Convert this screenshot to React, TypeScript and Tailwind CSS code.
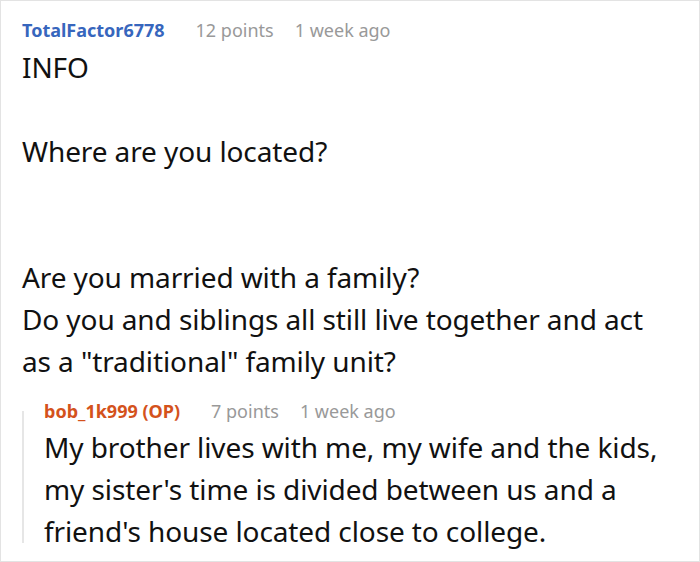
export default function App() {
  return (
    <div className="w-[700px] h-[562px] overflow-hidden bg-white border border-[#e3e3e3] font-['Noto_Sans',sans-serif]">
      {/* Parent comment */}
      <div className="pl-[21px] pt-[17px]">
        <div className="flex items-baseline text-[18px] leading-[24px]">
          <span className="font-bold text-[#3766bd]">TotalFactor6778</span>
          <span className="ml-[31px] text-[#999]">12 points</span>
          <span className="ml-[21px] text-[#999]">1 week ago</span>
        </div>
        <div className="text-[28px] leading-[42px] text-[#111] mt-[4px] tracking-[-0.1px]">
          <p>INFO</p>
          <p>&nbsp;</p>
          <p>Where are you located?</p>
          <p>&nbsp;</p>
          <p>&nbsp;</p>
          <p>Are you married with a family?</p>
          <p>Do you and siblings all still live together and act</p>
          <p>as a "traditional" family unit?</p>
        </div>
      </div>

      {/* Reply */}
      <div className="flex ml-[21px] mt-[17px]">
        <div className="w-[2px] shrink-0 bg-[#e6e6e6] mt-[12px] mb-[9px]" />
        <div className="pl-[20px]">
          <div className="flex items-baseline text-[18px] leading-[24px]">
            <span className="font-bold text-[#d4521c]">bob_1k999 (OP)</span>
            <span className="ml-[31px] text-[#999]">7 points</span>
            <span className="ml-[21px] text-[#999]">1 week ago</span>
          </div>
          <div className="text-[28px] leading-[42px] text-[#111] mt-[3px] tracking-[-0.1px]">
            <p>My brother lives with me, my wife and the kids,</p>
            <p>my sister's time is divided between us and a</p>
            <p>friend's house located close to college.</p>
          </div>
        </div>
      </div>
    </div>
  );
}
